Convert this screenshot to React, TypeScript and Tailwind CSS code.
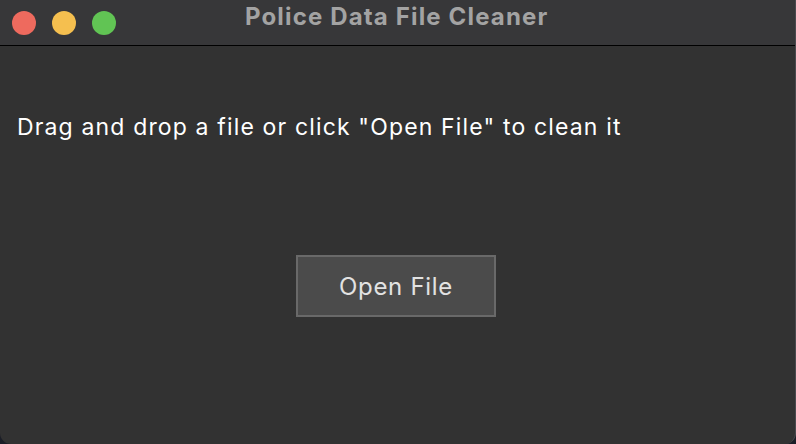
import React from "react";

export default function App() {
  return (
    <div className="w-[796px] h-[444px] bg-[#1b1e27] overflow-hidden" style={{ fontFamily: "Inter, 'Noto Sans', sans-serif" }}>
      <div className="w-full h-full flex flex-col bg-[#323232] rounded-b-[11px] border-r border-[#4a4a4e] overflow-hidden">
        <div className="h-[46px] shrink-0 bg-[#373739] border-b border-black flex items-center relative">
          <div className="flex gap-4 pl-3">
            <div className="w-6 h-6 rounded-full bg-[#ee6a5e]" />
            <div className="w-6 h-6 rounded-full bg-[#f5bf4f]" />
            <div className="w-6 h-6 rounded-full bg-[#61c454]" />
          </div>
          <div className="absolute left-[245px] top-0 h-[34px] flex items-center text-[24px] font-bold text-[#a3a3a3] tracking-[1.15px]">
            Police Data File Cleaner
          </div>
        </div>
        <div className="flex-1 flex flex-col pt-[67px]">
          <div className="pl-[17px] text-[23px] leading-[28px] text-white tracking-[1.15px]">
            Drag and drop a file or click "Open File" to clean it
          </div>
          <div className="mt-[114px] pl-[296px]">
            <button className="w-[200px] h-[62px] bg-[#4b4b4b] border-2 border-[#696969] text-[#e2e2e2] text-[24px] tracking-[0.7px] flex items-center justify-center pt-[2px]">
              Open File
            </button>
          </div>
        </div>
      </div>
    </div>
  );
}
